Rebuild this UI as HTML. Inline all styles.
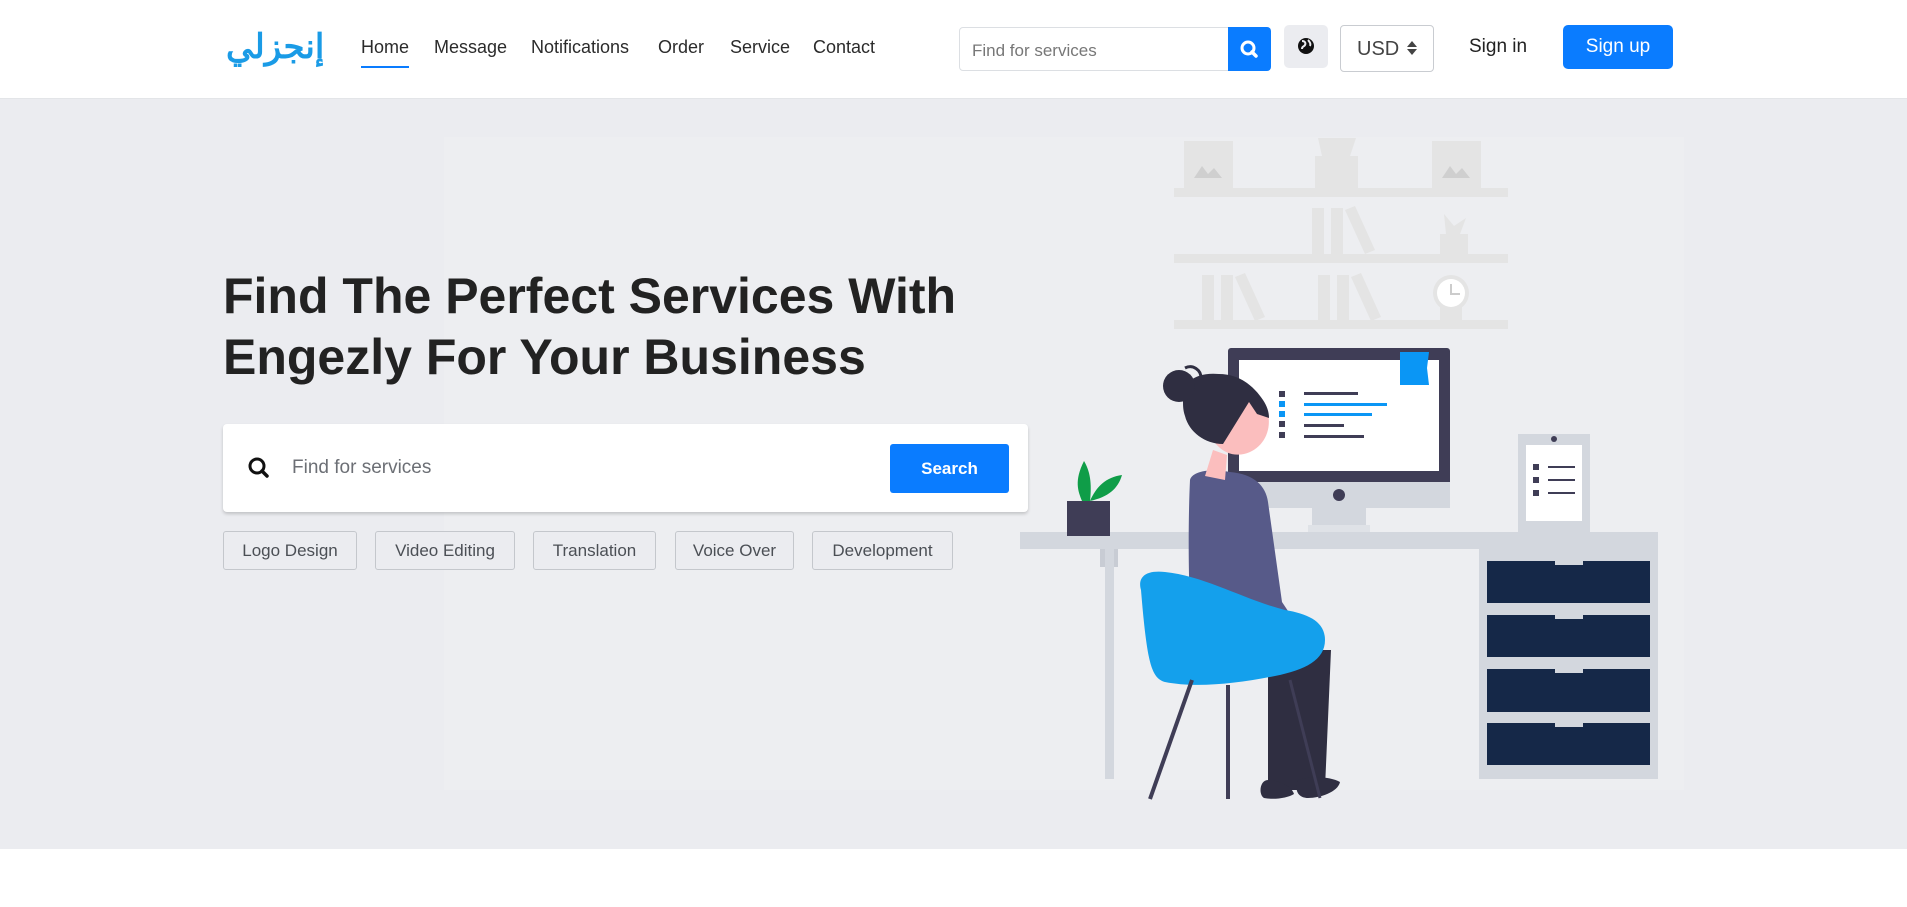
<!DOCTYPE html>
<html><head><meta charset="utf-8"><style>
*{box-sizing:border-box;margin:0;padding:0}
body{width:1907px;height:907px;overflow:hidden;background:#fff;font-family:"Liberation Sans","Noto Sans CJK SC",sans-serif;position:relative;color:#212529}
.hdr{position:absolute;left:0;top:0;width:1907px;height:99px;background:#fff;border-bottom:1px solid #e3e5e8}
.abs{position:absolute}
.logo{left:226px;top:27px;font-size:34px;font-weight:bold;color:#1a9be6;font-family:"Liberation Sans","Noto Sans CJK SC",sans-serif}
.nav{top:37px;font-size:18px;color:#2b2b2b}
.hero{left:0;top:99px;width:1907px;height:750px;background:#ebecf0}
.panel{left:444px;top:137px;width:1240px;height:653px;background:#edeef1}
h1{position:absolute;left:223px;top:266px;font-size:50px;line-height:61px;font-weight:bold;color:#222;letter-spacing:0}
.card{left:223px;top:424px;width:805px;height:88px;background:#fff;border-radius:4px;box-shadow:0 2px 3px rgba(0,0,0,.18)}
.tag{top:531px;height:39px;border:1px solid #c4c7cc;border-radius:3px;font-size:17px;color:#4b4f55;display:flex;align-items:center;justify-content:center;background:#ebecf0}
</style></head><body>
<div class="hdr"></div>
<div class="abs logo">إنجزلي</div>
<div class="abs nav" style="left:361px">Home</div>
<div class="abs" style="left:361px;top:66px;width:48px;height:2px;background:#0a7cff"></div>
<div class="abs nav" style="left:434px">Message</div>
<div class="abs nav" style="left:531px">Notifications</div>
<div class="abs nav" style="left:658px">Order</div>
<div class="abs nav" style="left:730px">Service</div>
<div class="abs nav" style="left:813px">Contact</div>
<div class="abs" style="left:959px;top:27px;width:270px;height:44px;border:1px solid #dcdfe3;border-radius:4px 0 0 4px;font-size:17px;color:#777;padding:13px 12px">Find for services</div>
<div class="abs" style="left:1228px;top:27px;width:43px;height:44px;background:#0a7cff;border-radius:0 4px 4px 0">
<svg width="43" height="44"><circle cx="20" cy="21" r="6" fill="none" stroke="#fff" stroke-width="3"/><line x1="24" y1="25" x2="28" y2="29" stroke="#fff" stroke-width="3.5" stroke-linecap="round"/></svg></div>
<div class="abs" style="left:1284px;top:25px;width:44px;height:43px;background:#ebecf0;border-radius:5px">
<svg width="44" height="43"><circle cx="22" cy="21" r="8" fill="#111"/><path d="M18 16c3 0 4 2 3 4s-3 1-3 4M24 15c2 2 3 4 2 6" stroke="#ebecf0" stroke-width="2" fill="none"/></svg></div>
<div class="abs" style="left:1340px;top:25px;width:94px;height:47px;border:1px solid #c9ccd1;border-radius:4px;font-size:20px;color:#444;padding:12px 0 0 16px">USD</div>
<div class="abs" style="left:1407px;top:41px;width:0;height:0;border:5px solid transparent;border-bottom:6px solid #444;border-top:0"></div>
<div class="abs" style="left:1407px;top:49px;width:0;height:0;border:5px solid transparent;border-top:6px solid #444;border-bottom:0"></div>
<div class="abs" style="left:1469px;top:36px;font-size:19px;color:#222">Sign in</div>
<div class="abs" style="left:1563px;top:25px;width:110px;height:44px;background:#0a7cff;border-radius:5px;color:#fff;font-size:19px;text-align:center;line-height:44px">Sign up</div>

<div class="abs hero"></div>
<div class="abs panel"></div>
<h1>Find The Perfect Services With<br>Engezly For Your Business</h1>
<div class="abs card"></div>
<svg class="abs" style="left:246px;top:455px" width="26" height="26"><circle cx="11" cy="11" r="7" fill="none" stroke="#111" stroke-width="3"/><line x1="16" y1="16" x2="21" y2="21" stroke="#111" stroke-width="3.5" stroke-linecap="round"/></svg>
<div class="abs" style="left:292px;top:457px;font-size:19px;color:#6c6f75">Find for services</div>
<div class="abs" style="left:890px;top:444px;width:119px;height:49px;background:#0a7cff;border-radius:3px;color:#fff;font-size:17px;font-weight:bold;text-align:center;line-height:49px">Search</div>
<div class="abs tag" style="left:223px;width:134px">Logo Design</div>
<div class="abs tag" style="left:375px;width:140px">Video Editing</div>
<div class="abs tag" style="left:533px;width:123px">Translation</div>
<div class="abs tag" style="left:675px;width:119px">Voice Over</div>
<div class="abs tag" style="left:812px;width:141px">Development</div>

<svg class="abs" style="left:0;top:0" width="1907" height="907">
<g fill="#e4e4e4">
<rect x="1174" y="188" width="334" height="9"/><rect x="1174" y="254" width="334" height="9"/><rect x="1174" y="320" width="334" height="9"/>
<rect x="1184" y="141" width="49" height="47"/><rect x="1432" y="141" width="49" height="47"/>
<rect x="1315" y="156" width="43" height="32"/><path d="M1322 156l-4-18h38l-6 18z"/>
<rect x="1312" y="208" width="12" height="46"/><rect x="1331" y="208" width="12" height="46"/><path d="M1345 210l10-4 20 44-10 4z"/>
<rect x="1440" y="234" width="28" height="20"/><path d="M1446 234l-2-20 10 12 12-8-6 16z"/>
<rect x="1202" y="275" width="12" height="46"/><rect x="1221" y="275" width="12" height="46"/><path d="M1235 277l10-4 20 44-10 4z"/>
<rect x="1318" y="275" width="12" height="46"/><rect x="1337" y="275" width="12" height="46"/><path d="M1351 277l10-4 20 44-10 4z"/>
<rect x="1440" y="300" width="22" height="20"/><circle cx="1451" cy="293" r="18"/>
</g>
<circle cx="1451" cy="293" r="14" fill="#fff"/><path d="M1451 284v10h9" stroke="#ccc" stroke-width="2" fill="none"/>
<g fill="#cfcfcf"><path d="M1194 178l8-12 6 8 6-6 8 10z"/><path d="M1442 178l8-12 6 8 6-6 8 10z"/></g>
<rect x="1020" y="532" width="638" height="17" fill="#d3d7de"/>
<rect x="1100" y="549" width="18" height="18" fill="#c8ccd4"/>
<rect x="1105" y="549" width="9" height="230" fill="#d3d7de"/>
<rect x="1479" y="546" width="179" height="233" fill="#d3d7de"/>
<g fill="#152848"><rect x="1487" y="561" width="163" height="42"/><rect x="1487" y="615" width="163" height="42"/><rect x="1487" y="669" width="163" height="43"/><rect x="1487" y="723" width="163" height="42"/></g>
<g fill="#d3d7de"><rect x="1555" y="561" width="28" height="4"/><rect x="1555" y="615" width="28" height="4"/><rect x="1555" y="669" width="28" height="4"/><rect x="1555" y="723" width="28" height="4"/></g>
<rect x="1518" y="434" width="72" height="98" fill="#d3d7de"/><rect x="1526" y="445" width="56" height="76" fill="#fff"/>
<circle cx="1554" cy="439" r="3" fill="#3f3d56"/>
<g fill="#3f3d56"><rect x="1533" y="464" width="6" height="6"/><rect x="1533" y="477" width="6" height="6"/><rect x="1533" y="490" width="6" height="6"/><rect x="1548" y="466" width="27" height="2"/><rect x="1548" y="479" width="27" height="2"/><rect x="1548" y="492" width="27" height="2"/></g>
<rect x="1312" y="504" width="54" height="24" fill="#d3d7de"/><rect x="1308" y="525" width="62" height="7" fill="#dfe2e7"/>
<rect x="1228" y="348" width="222" height="160" rx="3" fill="#3f3d56"/>
<rect x="1228" y="482" width="222" height="26" fill="#d3d7de"/>
<circle cx="1339" cy="495" r="6" fill="#3f3d56"/>
<rect x="1239" y="360" width="200" height="111" fill="#fff"/>
<path d="M1400 352h29l-2 16 2 17h-29z" fill="#0a96f5"/>
<g fill="#3f3d56"><rect x="1279" y="391" width="6" height="6"/><rect x="1279" y="421" width="6" height="6"/><rect x="1279" y="432" width="6" height="6"/><rect x="1304" y="392" width="54" height="3"/><rect x="1304" y="424" width="40" height="3"/><rect x="1304" y="435" width="60" height="3"/></g>
<g fill="#0a96f5"><rect x="1279" y="401" width="6" height="6"/><rect x="1279" y="411" width="6" height="6"/><rect x="1304" y="403" width="83" height="3"/><rect x="1304" y="413" width="68" height="3"/></g>
<path d="M1082 501c-4-10-8-20 2-40 6 10 8 22 6 40zM1090 501c6-14 16-24 32-26-4 14-14 22-32 26z" fill="#0f9d48"/>
<rect x="1067" y="501" width="43" height="35" fill="#3f3d56"/>
<path d="M1268 650l0 140 30 0 0-140zM1295 650l0 138 30 0 6-138z" fill="#2f2e41"/>
<path d="M1268 780c-8 0-10 14-4 18 10 2 24 0 30-4-2-8-16-14-26-14zM1298 780c-4 10 0 18 10 18 12 0 30-6 32-16-10-6-32-6-42-2z" fill="#2f2e41"/>
<path d="M1190 480c2-8 18-12 40-8 24 2 36 14 38 30l14 100 20 30-110 0c-4-40-4-110-2-152z" fill="#575a89"/>
<path d="M1213 450l-8 26 20 4 2-25z" fill="#fbbebe"/>
<path d="M1224 384c20-2 40 8 44 30 4 18-6 36-24 40-18 4-34-10-36-30-2-20 2-38 16-40z" fill="#fbbebe"/>
<path d="M1183 400c-2-20 16-28 36-26 22 0 36 14 44 26 4 6 6 12 6 18l-12-4-8-12-26 42c-18 0-34-12-38-28-2-6-2-10-2-16z" fill="#2f2e41"/>
<circle cx="1179" cy="386" r="16" fill="#2f2e41"/>
<path d="M1185 368c8-4 16 2 16 10" stroke="#2f2e41" stroke-width="3" fill="none"/>
<path d="M1141 590c-4-14 6-20 24-18 40 4 80 28 120 38 24 4 40 12 40 30 0 20-20 30-50 36-40 8-80 12-110 6-14-4-18-20-24-92z" fill="#14a0ec"/>
<path d="M1192 680l-42 119" stroke="#3f3d56" stroke-width="4"/>
<path d="M1228 685v114" stroke="#3f3d56" stroke-width="4"/>
<path d="M1290 680l30 118" stroke="#3f3d56" stroke-width="3"/>
</svg>
</body></html>
